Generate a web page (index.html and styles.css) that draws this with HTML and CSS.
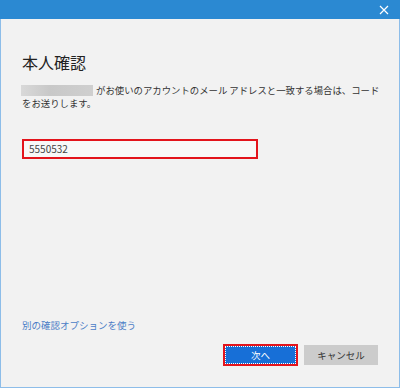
FILE: index.html
```html
<!DOCTYPE html>
<html lang="ja">
<head>
    <meta charset="UTF-8">
    <meta name="viewport" content="width=device-width, initial-scale=1.0">
    <title>本人確認</title>
    <link rel="stylesheet" href="styles.css">
</head>
<body>
    <div class="dialog">
        <div class="titlebar">
            <svg class="close" width="10" height="10" viewBox="0 0 10 10">
                <path d="M1 1 L9 9 M9 1 L1 9" stroke="#fff" stroke-width="1.2" fill="none"/>
            </svg>
        </div>
        <div class="content">
            <h1>本人確認</h1>
            <p class="message"><span class="masked"></span>がお使いのアカウントのメール アドレスと一致する場合は、コードをお送りします。</p>
            <div class="field">
                <input type="text" value="5550532">
            </div>

            <a class="alt-link" href="#">別の確認オプションを使う</a>
            <div class="buttons">
                <button class="btn btn-primary">次へ</button>
                <button class="btn btn-cancel">キャンセル</button>
            </div>
        </div>
    </div>
</body>
</html>
```

FILE: styles.css
```css
/* General styles */
body {
    margin: 0;
    padding: 0;
    font-family: "Noto Sans CJK JP", "Noto Sans", sans-serif;
    color: #333;
}

.dialog {
    width: 400px;
    height: 388px;
    box-sizing: border-box;
    display: flex;
    flex-direction: column;
    background-color: #f2f2f2;
    border: 1px solid #8dbde9;
    border-top: none;
}

.titlebar {
    height: 19px;
    background-color: #2b89d2;
    margin: 0 -1px;
    display: flex;
    justify-content: flex-end;
    align-items: center;
    padding-right: 11px;
}

.content {
    flex: 1;
    display: flex;
    flex-direction: column;
    padding: 32px 21px 21px;
}

h1 {
    margin: 0;
    font-size: 16px;
    font-weight: normal;
    line-height: 22px;
    color: #222;
}

.message {
    margin: 11px -6px 0 0;
    font-size: 9.4px;
    line-height: 13px;
    color: #333;
}

.masked {
    display: inline-block;
    width: 72px;
    height: 11px;
    margin-left: -1px;
    margin-right: 3px;
    vertical-align: -2px;
    background: linear-gradient(90deg, #d9d9d9, #c8c8c8 40%, #cfcfcf);
}

/* Code input */
.field {
    margin-top: 24px;
    width: 236px;
}

.field input {
    width: 100%;
    height: 20px;
    box-sizing: border-box;
    border: 2px solid #e3141c;
    background-color: #f8f8f8;
    padding: 0 5px;
    font-family: inherit;
    font-size: 10px;
    color: #444;
    outline: none;
}

.alt-link {
    margin-top: auto;
    font-size: 9.5px;
    line-height: 14px;
    color: #4a7cc6;
    text-decoration: none;
    align-self: flex-start;
}

/* Buttons */
.buttons {
    display: flex;
    justify-content: flex-end;
    align-items: center;
    gap: 6px;
    margin-top: 12px;
}

.btn {
    height: 21px;
    width: 75px;
    box-sizing: border-box;
    font-family: inherit;
    font-size: 9.5px;
    padding: 0;
    cursor: pointer;
}

.btn-primary {
    height: 22px;
    background-color: #176fd7;
    color: white;
    border: 2px solid #e3141c;
    outline: 1px dotted #fff;
    outline-offset: -3px;
}

.btn-cancel {
    width: 74px;
    height: 20px;
    background-color: #cccccc;
    color: #333;
    border: none;
}
```
